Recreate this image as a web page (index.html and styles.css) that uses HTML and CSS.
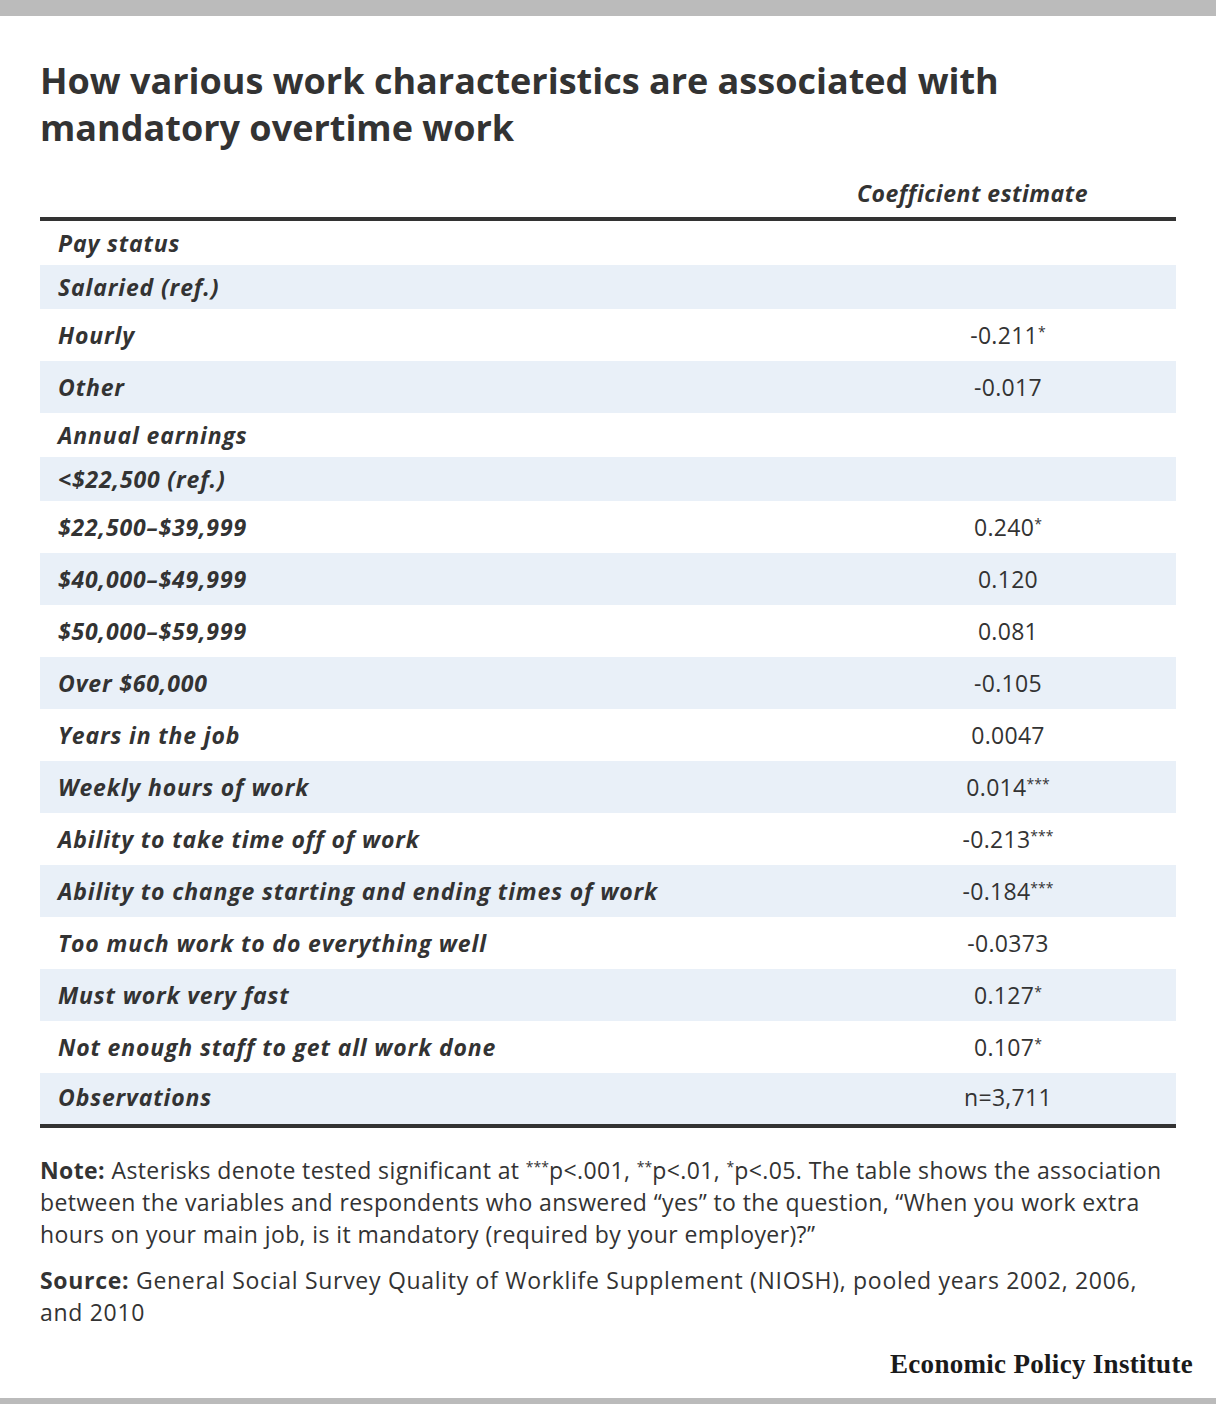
FILE: index.html
```html
<!DOCTYPE html>
<html>
<head>
<meta charset="utf-8">
<link rel="stylesheet" href="styles.css">
</head>
<body>
<div class="top-bar"></div>
<div class="content">
  <h1 class="title">How various work characteristics are associated with mandatory overtime work</h1>
  <div class="table">
    <div class="head-row"><span class="head-cell">Coefficient estimate</span></div>
    <div class="row short"><span class="label">Pay status</span><span class="value"></span></div>
    <div class="row short alt"><span class="label">Salaried (ref.)</span><span class="value"></span></div>
    <div class="row"><span class="label">Hourly</span><span class="value">-0.211<sup>*</sup></span></div>
    <div class="row alt"><span class="label">Other</span><span class="value">-0.017</span></div>
    <div class="row short"><span class="label">Annual earnings</span><span class="value"></span></div>
    <div class="row short alt"><span class="label">&lt;$22,500 (ref.)</span><span class="value"></span></div>
    <div class="row"><span class="label">$22,500–$39,999</span><span class="value">0.240<sup>*</sup></span></div>
    <div class="row alt"><span class="label">$40,000–$49,999</span><span class="value">0.120</span></div>
    <div class="row"><span class="label">$50,000–$59,999</span><span class="value">0.081</span></div>
    <div class="row alt"><span class="label">Over $60,000</span><span class="value">-0.105</span></div>
    <div class="row"><span class="label">Years in the job</span><span class="value">0.0047</span></div>
    <div class="row alt"><span class="label">Weekly hours of work</span><span class="value">0.014<sup>***</sup></span></div>
    <div class="row"><span class="label">Ability to take time off of work</span><span class="value">-0.213<sup>***</sup></span></div>
    <div class="row alt"><span class="label">Ability to change starting and ending times of work</span><span class="value">-0.184<sup>***</sup></span></div>
    <div class="row"><span class="label">Too much work to do everything well</span><span class="value">-0.0373</span></div>
    <div class="row alt"><span class="label">Must work very fast</span><span class="value">0.127<sup>*</sup></span></div>
    <div class="row"><span class="label">Not enough staff to get all work done</span><span class="value">0.107<sup>*</sup></span></div>
    <div class="row alt last"><span class="label">Observations</span><span class="value">n=3,711</span></div>
  </div>
  <p class="note"><strong>Note:</strong> Asterisks denote tested significant at <sup>***</sup>p&lt;.001, <sup>**</sup>p&lt;.01, <sup>*</sup>p&lt;.05. The table shows the association between the variables and respondents who answered “yes” to the question, “When you work extra hours on your main job, is it mandatory (required by your employer)?”</p>
  <p class="note source"><strong>Source:</strong> General Social Survey Quality of Worklife Supplement (NIOSH), pooled years 2002, 2006, and 2010</p>
</div>
<div class="logo-row"><span class="logo">Economic Policy Institute</span></div>
<div class="bottom-bar"></div>
</body>
</html>
```

FILE: styles.css
```css
* { box-sizing: border-box; }
html, body {
  margin: 0;
  padding: 0;
  background: #fff;
}
body {
  font-family: "Open Sans", "Liberation Sans", sans-serif;
  color: #333;
  width: 1216px;
  height: 1404px;
  position: relative;
  overflow: hidden;
}
.top-bar {
  height: 16px;
  background: #bbb;
}
.content {
  padding: 0 40px;
}
.title {
  margin: 41px 0 0;
  font-size: 36px;
  line-height: 47px;
  font-weight: 700;
  color: #333;
  max-width: 1000px;
}
.table {
  display: flex;
  flex-direction: column;
}
.head-row {
  display: flex;
  justify-content: flex-end;
  padding: 28px 88px 10px 0;
  border-bottom: 4px solid #333;
}
.head-cell {
  font-size: 23px;
  line-height: 28px;
  font-weight: 700;
  font-style: italic;
  letter-spacing: 0.5px;
}
.row {
  display: grid;
  grid-template-columns: 1fr 336px;
  align-items: center;
  height: 52px;
}
.row.short { height: 44px; }
.row.alt { background: #e9f0f8; }
.row.last { border-bottom: 4px solid #333; height: 55px; padding-bottom: 3px; }
.label {
  padding-left: 18px;
  font-size: 23px;
  font-weight: 700;
  font-style: italic;
  line-height: 28px;
  letter-spacing: 0.85px;
}
.value {
  text-align: center;
  font-size: 23px;
  line-height: 28px;
  letter-spacing: 0.3px;
}
sup {
  font-size: 14px;
  line-height: 1;
  vertical-align: 7px;
  letter-spacing: 0;
}
.note {
  margin: 26px 0 0;
  font-size: 23px;
  line-height: 32px;
  letter-spacing: 0.4px;
}
.note.source { margin-top: 14px; letter-spacing: 0.7px; }
.note strong { font-weight: 700; }
.logo-row {
  display: flex;
  justify-content: flex-end;
  padding: 20px 23px 0 0;
}
.logo {
  font-family: "Liberation Serif", "DejaVu Serif", serif;
  font-weight: 700;
  font-size: 27px;
  line-height: 32px;
  letter-spacing: 0.3px;
  color: #1a1a1a;
}
.bottom-bar {
  position: absolute;
  left: 0;
  right: 0;
  bottom: 0;
  height: 6px;
  background: #bbb;
}
```
